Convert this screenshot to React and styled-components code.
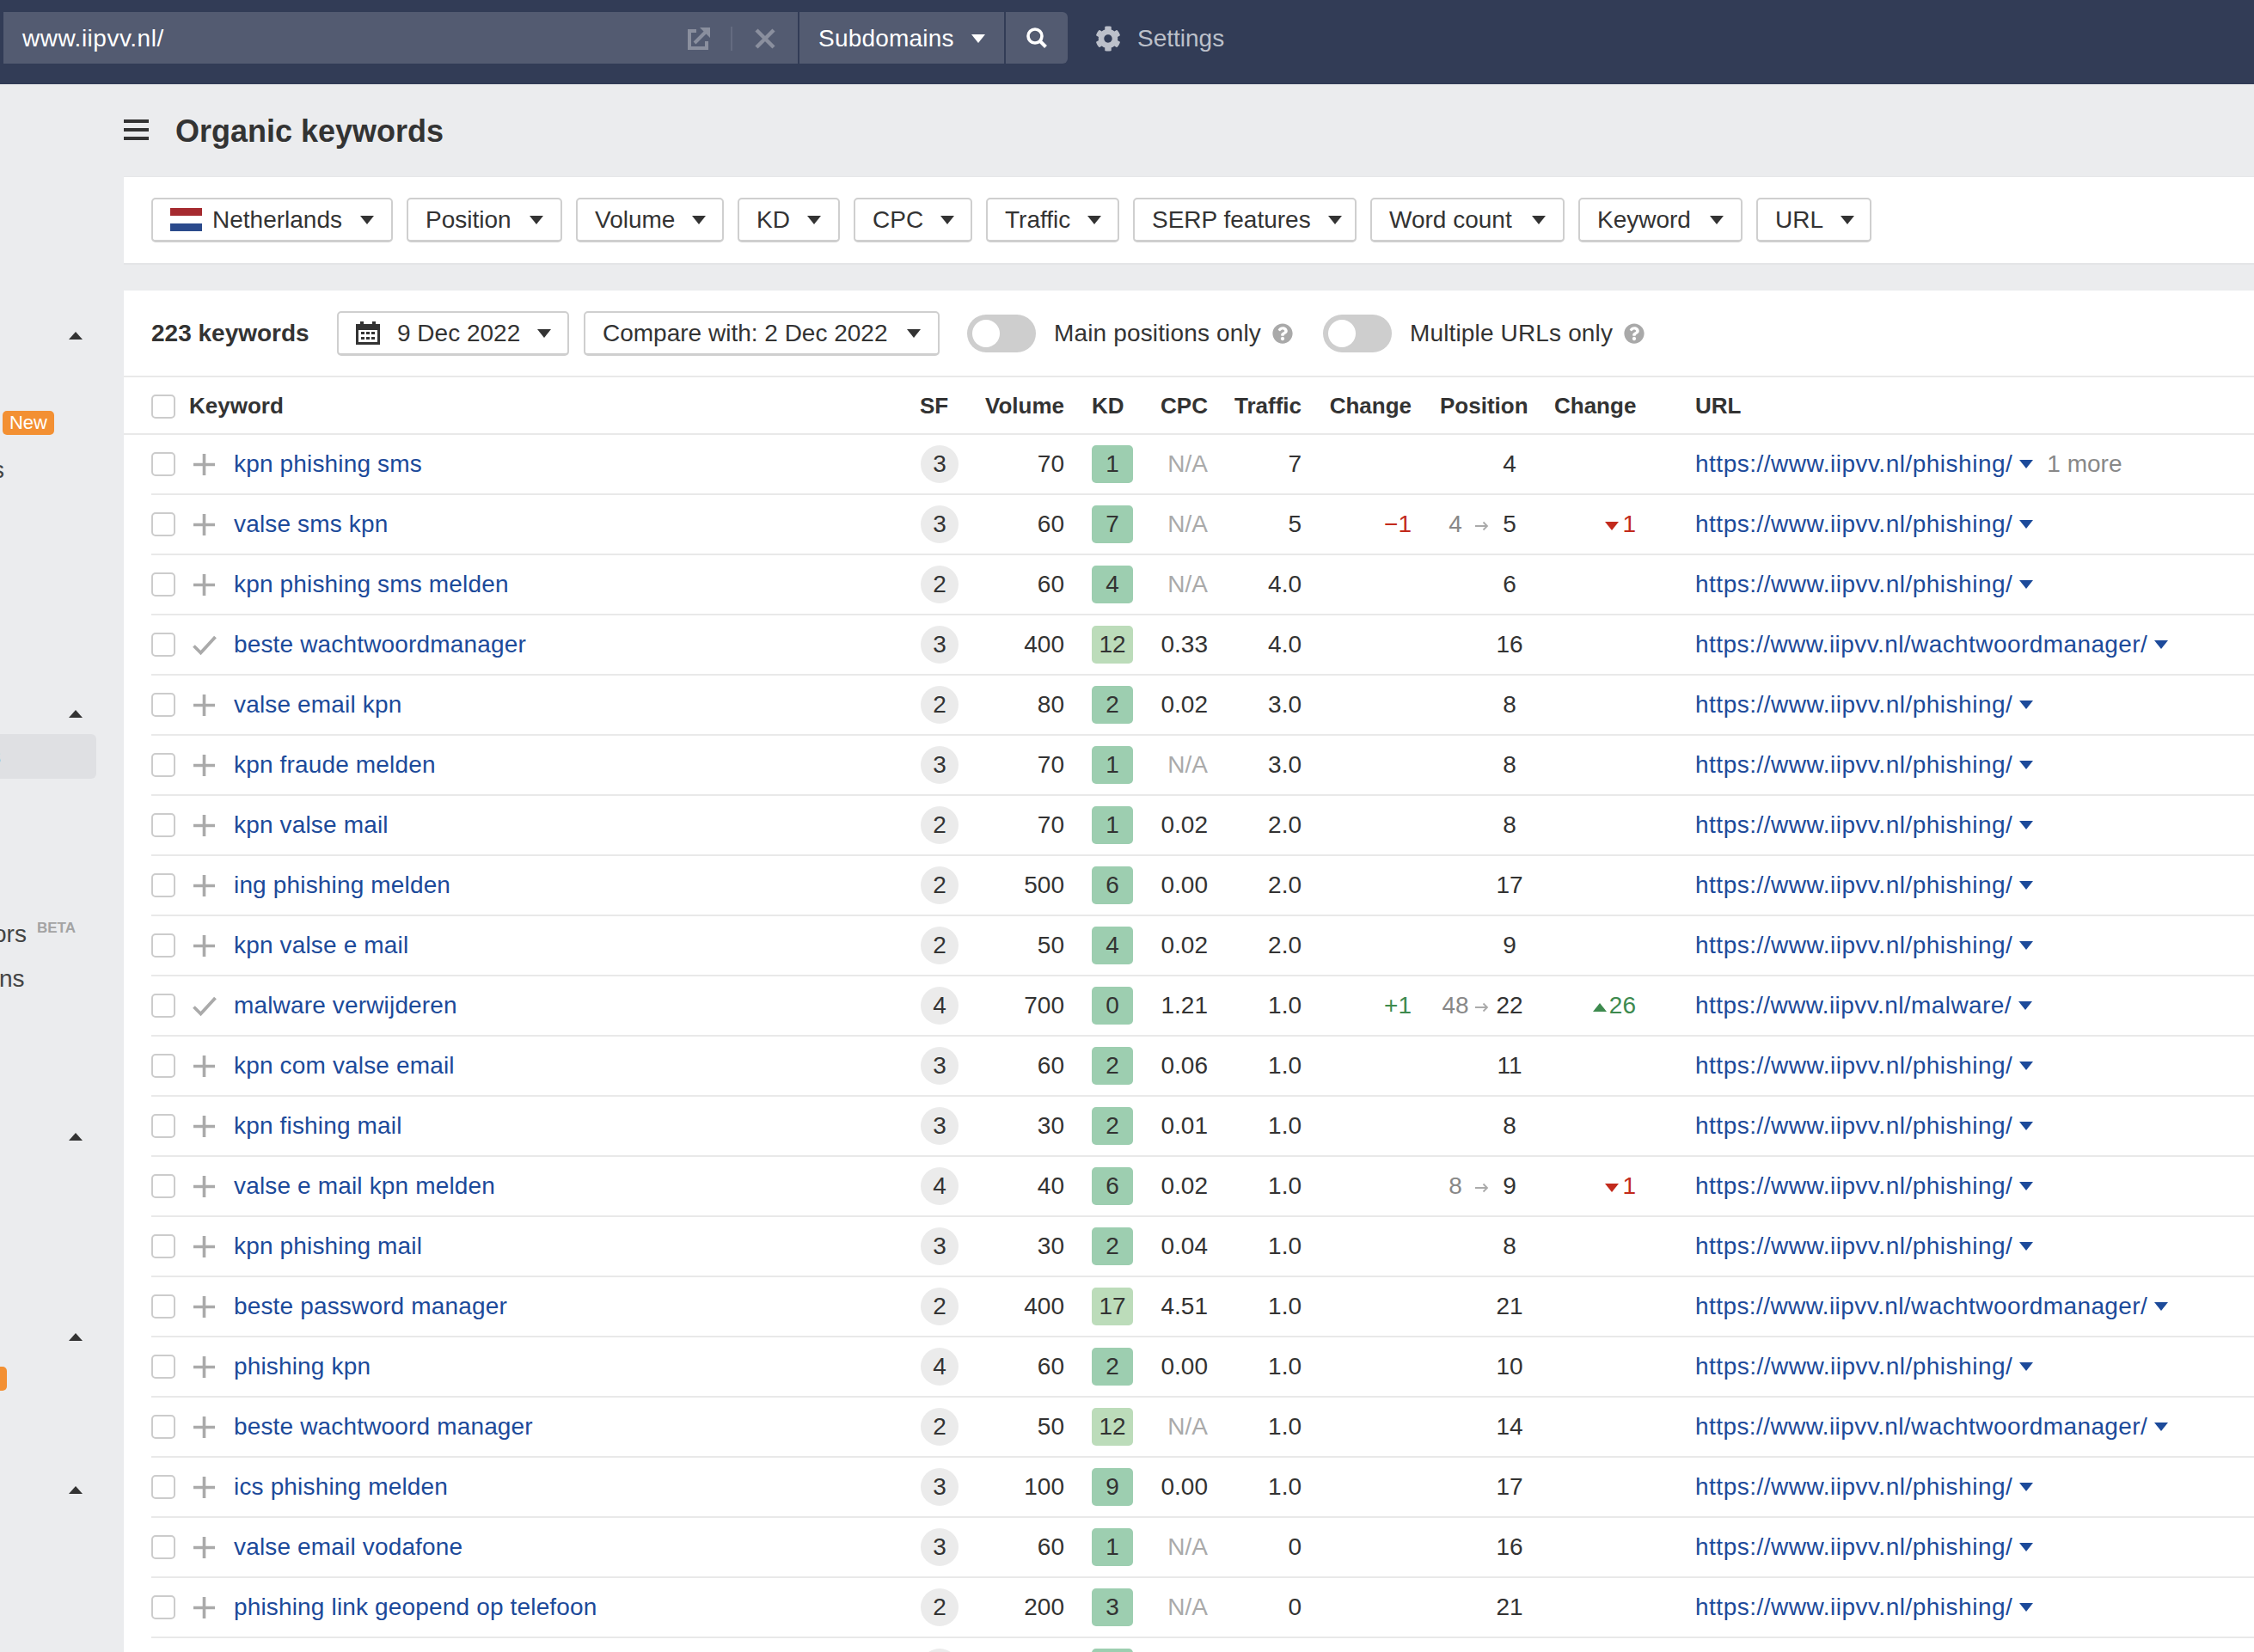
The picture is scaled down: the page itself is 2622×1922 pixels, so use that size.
import React from 'react'
import styled, { createGlobalStyle } from 'styled-components'
import { FaCog, FaQuestionCircle } from 'react-icons/fa'

const GlobalStyle = createGlobalStyle`
  html, body { margin: 0; padding: 0; background: #ebecee; }
  body { font-family: "Liberation Sans", Arial, sans-serif; font-size: 28px; color: #333; width: 2622px; height: 1922px; overflow: hidden; }
  * { box-sizing: border-box; }
`

const Topbar = styled.div`
  height: 98px;
  background: #323c56;
  display: flex;
  align-items: flex-start;
  padding-top: 14px;
`
const SearchBox = styled.div`
  display: flex;
  gap: 2px;
  height: 60px;
  margin-left: 4px;
`
const SearchPart = styled.div`
  height: 60px;
  background: #535b71;
  color: #fff;
  display: flex;
  align-items: center;
  width: ${p => p.$w}px;
  padding: ${p => p.$center ? 0 : 2}px ${p => p.$pad || 0}px 0;
  justify-content: ${p => p.$center ? 'center' : 'flex-start'};
  border-radius: ${p => p.$last ? '0 6px 6px 0' : '0'};
`
const UrlText = styled.span`
  flex: 1;
  letter-spacing: 0.5px;
`
const SubdomainText = styled.span`
  letter-spacing: 0.2px;
`
const UrlIcons = styled.div`
  display: flex;
  align-items: center;
  margin-right: 4px;
`
const IconSep = styled.span`
  width: 2px;
  height: 28px;
  background: #646b80;
  margin: 0 26px 0 24px;
`
const Caret = styled.span`
  display: inline-block;
  width: 0;
  height: 0;
  flex: none;
  border-left: ${p => p.$s || 8}px solid transparent;
  border-right: ${p => p.$s || 8}px solid transparent;
  border-top: ${p => (p.$s || 8) + 2}px solid ${p => p.$c || '#333'};
  margin-left: ${p => p.$ml ?? 20}px;
`
const SettingsLink = styled.div`
  display: flex;
  align-items: center;
  height: 60px;
  margin-left: 32px;
  padding-top: 2px;
  gap: 19px;
  color: #bcc0ca;
`

const Body = styled.div`
  display: flex;
  align-items: flex-start;
`
const Sidebar = styled.div`
  width: 144px;
  flex: none;
  height: 1824px;
  overflow: hidden;
  display: flex;
  flex-direction: column;
  font-size: 28px;
`
const SideArrow = styled.div`
  width: 0;
  height: 0;
  flex: none;
  margin-left: 80px;
  margin-top: ${p => p.$mt}px;
  border-left: 8px solid transparent;
  border-right: 8px solid transparent;
  border-bottom: 9px solid #333;
`
const NewBadge = styled.div`
  align-self: flex-start;
  flex: none;
  margin: ${p => p.$mt}px 0 0 3px;
  width: 60px;
  height: 28px;
  border-radius: 5px;
  background: #f39033;
  color: #fff;
  font-size: 22px;
  line-height: 28px;
  text-align: center;
`
const SideText = styled.div`
  flex: none;
  margin-top: ${p => p.$mt}px;
  margin-left: ${p => p.$ml || 0}px;
  line-height: 32px;
  color: #444;
  white-space: nowrap;
`
const SideBeta = styled.span`
  font-size: 17px;
  font-weight: bold;
  color: #a3a3a3;
  margin-left: 12px;
  vertical-align: 11px;
  line-height: 0;
`
const SideSelected = styled.div`
  width: 112px;
  height: 52px;
  flex: none;
  margin-top: ${p => p.$mt}px;
  background: #dfe0e3;
  border-radius: 0 6px 6px 0;
  line-height: 52px;
  color: #444;
  text-indent: -13px;
  overflow: hidden;
`
const OrangeStub = styled.div`
  width: 8px;
  height: 28px;
  flex: none;
  margin-top: ${p => p.$mt}px;
  background: #f39033;
  border-radius: 0 5px 5px 0;
`

const Main = styled.div`
  flex: 1;
  min-width: 0;
`
const TitleRow = styled.div`
  height: 108px;
  display: flex;
  align-items: center;
  padding-top: 2px;
  color: #333;
`
const BurgerIcon = styled.span`
  display: flex;
  flex-direction: column;
  gap: 6px;
  width: 29px;
  margin-right: 31px;
  margin-top: -4px;
  & > i {
    display: block;
    height: 4px;
    background: #333;
  }
`
const Title = styled.h1`
  margin: 0;
  font-size: 36px;
  font-weight: bold;
`
const FilterPanel = styled.div`
  height: 100px;
  background: #fff;
  box-shadow: 0 -1px 0 #e6e7e9, 0 2px 0 #e4e5e7;
  display: flex;
  align-items: center;
  padding-left: 32px;
`
const DropButton = styled.div`
  height: 52px;
  width: ${p => p.$w}px;
  margin-right: ${p => p.$mr ?? 16}px;
  flex: none;
  background: #fff;
  border: 2px solid #cfcfcf;
  border-bottom-width: 3px;
  border-radius: 5px;
  display: flex;
  align-items: center;
  justify-content: space-between;
  padding: 0 20px;
  white-space: nowrap;
`
const FlagText = styled.span`
  display: flex;
  align-items: center;
`
const Flag = styled.span`
  display: flex;
  flex-direction: column;
  width: 37px;
  height: 28px;
  margin-right: 12px;
`
const FlagStripe = styled.i`
  display: block;
  flex: 1;
  background: ${p => p.$c};
`
const TablePanel = styled.div`
  margin-top: 32px;
  background: #fff;
  height: 1584px;
  overflow: hidden;
`
const Toolbar = styled.div`
  height: 101px;
  display: flex;
  align-items: center;
  padding: 1px 0 0 32px;
  border-bottom: 2px solid #e9e9e9;
`
const KeywordCount = styled.b`
  font-size: 28px;
  width: 216px;
  flex: none;
`
const DateText = styled.span`
  display: flex;
  align-items: center;
  gap: 20px;
`
const Toggle = styled.span`
  width: 80px;
  height: 44px;
  flex: none;
  border-radius: 22px;
  background: #cecece;
  padding: 6px;
  display: flex;
  margin-left: ${p => p.$ml || 0}px;
  & > i {
    display: block;
    width: 32px;
    height: 32px;
    border-radius: 50%;
    background: #fff;
  }
`
const ToggleLabel = styled.span`
  margin-left: 21px;
  color: #333;
  letter-spacing: 0.15px;
`
const HelpIcon = styled.span`
  margin-left: 13px;
  display: flex;
  color: #a9a9a9;
`

const COLUMNS = '894px 60px 108px 80px 87px 109px 128px 138px 123px 69px 1fr'

const HeadRow = styled.div`
  height: 67px;
  display: grid;
  grid-template-columns: ${COLUMNS};
  align-items: center;
  margin-left: 32px;
  font-size: 26px;
  font-weight: bold;
  position: relative;
  &::after {
    content: '';
    position: absolute;
    left: -32px;
    right: 0;
    bottom: 0;
    height: 2px;
    background: #e9e9e9;
  }
`
const Row = styled.div`
  height: 70px;
  display: grid;
  grid-template-columns: ${COLUMNS};
  align-items: center;
  margin-left: 32px;
  border-bottom: 2px solid #e9e9e9;
`
const KeywordCell = styled.div`
  display: flex;
  align-items: center;
  min-width: 0;
`
const Check = styled.span`
  width: 28px;
  height: 28px;
  flex: none;
  border: 2px solid #ccc;
  border-radius: 5px;
  background: #fff;
`
const AddIcon = styled.span`
  width: 25px;
  height: 25px;
  flex: none;
  margin: 0 22px 0 21px;
  display: flex;
`
const DoneSvg = styled.svg`
  margin-left: -1px;
  flex: none;
`
const KeywordLink = styled.a`
  color: #1c4a9a;
  white-space: nowrap;
  letter-spacing: 0.16px;
`
const HeadKeyword = styled.span`
  margin-left: 16px;
`
const Right = styled.div`
  text-align: right;
  color: ${p => p.$c || 'inherit'};
  white-space: nowrap;
`
const Left = styled.div`
  padding-left: ${p => p.$pl || 0}px;
`
const SfBadge = styled.span`
  display: block;
  width: 44px;
  height: 44px;
  margin-left: 1px;
  border-radius: 50%;
  background: #ebebeb;
  text-align: center;
  line-height: 44px;
`
const KdBadge = styled.span`
  display: block;
  justify-self: end;
  width: 48px;
  height: 44px;
  border-radius: 5px;
  background: ${p => p.$v >= 10 ? '#bcdcba' : '#9dceb0'};
  text-align: center;
  line-height: 44px;
`
const PosGrid = styled.div`
  display: grid;
  grid-template-columns: 46px 16px 48px;
  margin-left: 28px;
  text-align: center;
`
const PosFrom = styled.span`
  color: #888;
`
const PosArrow = styled.span`
  display: flex;
  align-items: center;
  justify-content: center;
  padding-top: 4px;
`
const UrlCell = styled.div`
  display: flex;
  align-items: center;
  white-space: nowrap;
  color: #1c4a9a;
`
const UrlLink = styled.a`
  letter-spacing: ${p => p.$tight ? 0.42 : 0.5}px;
`
const MoreText = styled.span`
  color: #888;
  margin-left: 16px;
`
const ChangeTri = styled.span`
  display: inline-block;
  width: 0;
  height: 0;
  margin-right: ${p => p.$mr}px;
  vertical-align: 2px;
  border-left: 8px solid transparent;
  border-right: 8px solid transparent;
  ${p => p.$up
    ? 'border-bottom: 10px solid #3d8a4e;'
    : 'border-top: 10px solid #c22a1c;'}
`

const PH = 'https://www.iipvv.nl/phishing/'
const WW = 'https://www.iipvv.nl/wachtwoordmanager/'

const rows = [
  { k: 'kpn phishing sms', sf: 3, vol: 70, kd: 1, cpc: 'N/A', tr: '7', pos: 4, url: PH, more: '1 more' },
  { k: 'valse sms kpn', sf: 3, vol: 60, kd: 7, cpc: 'N/A', tr: '5', ch: '−1', from: 4, pos: 5, pc: -1, url: PH },
  { k: 'kpn phishing sms melden', sf: 2, vol: 60, kd: 4, cpc: 'N/A', tr: '4.0', pos: 6, url: PH },
  { k: 'beste wachtwoordmanager', done: true, sf: 3, vol: 400, kd: 12, cpc: '0.33', tr: '4.0', pos: 16, url: WW },
  { k: 'valse email kpn', sf: 2, vol: 80, kd: 2, cpc: '0.02', tr: '3.0', pos: 8, url: PH },
  { k: 'kpn fraude melden', sf: 3, vol: 70, kd: 1, cpc: 'N/A', tr: '3.0', pos: 8, url: PH },
  { k: 'kpn valse mail', sf: 2, vol: 70, kd: 1, cpc: '0.02', tr: '2.0', pos: 8, url: PH },
  { k: 'ing phishing melden', sf: 2, vol: 500, kd: 6, cpc: '0.00', tr: '2.0', pos: 17, url: PH },
  { k: 'kpn valse e mail', sf: 2, vol: 50, kd: 4, cpc: '0.02', tr: '2.0', pos: 9, url: PH },
  { k: 'malware verwijderen', done: true, sf: 4, vol: 700, kd: 0, cpc: '1.21', tr: '1.0', ch: '+1', from: 48, pos: 22, pc: 26, url: 'https://www.iipvv.nl/malware/' },
  { k: 'kpn com valse email', sf: 3, vol: 60, kd: 2, cpc: '0.06', tr: '1.0', pos: 11, url: PH },
  { k: 'kpn fishing mail', sf: 3, vol: 30, kd: 2, cpc: '0.01', tr: '1.0', pos: 8, url: PH },
  { k: 'valse e mail kpn melden', sf: 4, vol: 40, kd: 6, cpc: '0.02', tr: '1.0', from: 8, pos: 9, pc: -1, url: PH },
  { k: 'kpn phishing mail', sf: 3, vol: 30, kd: 2, cpc: '0.04', tr: '1.0', pos: 8, url: PH },
  { k: 'beste password manager', sf: 2, vol: 400, kd: 17, cpc: '4.51', tr: '1.0', pos: 21, url: WW },
  { k: 'phishing kpn', sf: 4, vol: 60, kd: 2, cpc: '0.00', tr: '1.0', pos: 10, url: PH },
  { k: 'beste wachtwoord manager', sf: 2, vol: 50, kd: 12, cpc: 'N/A', tr: '1.0', pos: 14, url: WW },
  { k: 'ics phishing melden', sf: 3, vol: 100, kd: 9, cpc: '0.00', tr: '1.0', pos: 17, url: PH },
  { k: 'valse email vodafone', sf: 3, vol: 60, kd: 1, cpc: 'N/A', tr: '0', pos: 16, url: PH },
  { k: 'phishing link geopend op telefoon', sf: 2, vol: 200, kd: 3, cpc: 'N/A', tr: '0', pos: 21, url: PH },
  { k: '', sf: '', vol: '', kd: 3, cpc: '', tr: '', pos: '', url: '' },
]

const filters = [
  ['Position', 181], ['Volume', 172], ['KD', 119], ['CPC', 138], ['Traffic', 155],
  ['SERP features', 260], ['Word count', 226], ['Keyword', 191], ['URL', 134],
]

const PlusSvg = () => (
  <svg width="25" height="25" viewBox="0 0 25 25">
    <path d="M12.5 0v25M0 12.5h25" stroke="#aaa" strokeWidth="3.6" fill="none" />
  </svg>
)
const CheckSvg = () => (
  <DoneSvg width="28" height="25" viewBox="0 0 28 25">
    <path d="M1.500 13.500l8 8L26.500 3" stroke="#aaa" strokeWidth="3.8" fill="none" />
  </DoneSvg>
)
const ArrowSvg = () => (
  <svg width="16" height="12" viewBox="0 0 16 12">
    <path d="M0 6h14M9.500 1.500L14 6l-4.500 4.500" stroke="#aaa" strokeWidth="1.800" fill="none" />
  </svg>
)
const OpenLinkSvg = () => (
  <svg width="26" height="26" viewBox="0 0 26 26">
    <path d="M10 4H2v20h20v-8" stroke="#8a8f9e" strokeWidth="4" fill="none" />
    <path d="M8 18L21 5" stroke="#8a8f9e" strokeWidth="4" fill="none" />
    <path d="M14 0h12v12z" fill="#8a8f9e" />
  </svg>
)
const ClearSvg = () => (
  <svg width="24" height="24" viewBox="0 0 24 24">
    <path d="M2 2l20 20M22 2L2 22" stroke="#8a8f9e" strokeWidth="4.500" fill="none" />
  </svg>
)
const SearchSvg = () => (
  <svg width="24" height="24" viewBox="0 0 24 24">
    <circle cx="10" cy="10" r="8" stroke="#fff" strokeWidth="3.600" fill="none" />
    <path d="M15.500 15.500L22.500 22.500" stroke="#fff" strokeWidth="4" fill="none" />
  </svg>
)
const CalendarSvg = () => (
  <svg width="28" height="27" viewBox="0 0 28 27">
    <path d="M5 0h4v4H5zM19 0h4v4h-4z" fill="#333" />
    <path fillRule="evenodd" fill="#333" d="M0 3h28v24H0zM3 10v14h22V10z" />
    <path fill="#333" d="M6 12h4v3H6zM12 12h4v3h-4zM18 12h4v3h-4zM6 18h4v3H6zM12 18h4v3h-4zM18 18h4v3h-4z" />
  </svg>
)

const App = () => (
  <>
    <GlobalStyle />
    <Topbar>
      <SearchBox>
        <SearchPart $w={924} $pad={22}>
          <UrlText>www.iipvv.nl/</UrlText>
          <UrlIcons>
            <OpenLinkSvg />
            <IconSep />
            <ClearSvg />
          </UrlIcons>
        </SearchPart>
        <SearchPart $w={238} $pad={22}>
          <SubdomainText>Subdomains</SubdomainText>
          <Caret $c="#fff" $ml={20} />
        </SearchPart>
        <SearchPart $w={72} $center $last>
          <SearchSvg />
        </SearchPart>
      </SearchBox>
      <SettingsLink>
        <FaCog size={30} />
        Settings
      </SettingsLink>
    </Topbar>
    <Body>
      <Sidebar>
        <SideArrow $mt={288} />
        <NewBadge $mt={83}>New</NewBadge>
        <SideText $mt={25} $ml={-9}>s</SideText>
        <SideArrow $mt={263} />
        <SideSelected $mt={19}>s</SideSelected>
        <SideText $mt={165} $ml={-8}>ors<SideBeta>BETA</SideBeta></SideText>
        <SideText $mt={20} $ml={-1}>ns</SideText>
        <SideArrow $mt={163} />
        <SideArrow $mt={224} />
        <OrangeStub $mt={30} />
        <SideArrow $mt={111} />
      </Sidebar>
      <Main>
        <TitleRow>
          <BurgerIcon><i /><i /><i /></BurgerIcon>
          <Title>Organic keywords</Title>
        </TitleRow>
        <FilterPanel>
          <DropButton $w={281}>
            <FlagText>
              <Flag>
                <FlagStripe $c="#a52a2f" />
                <FlagStripe $c="#fff" />
                <FlagStripe $c="#2b4a8c" />
              </Flag>
              Netherlands
            </FlagText>
            <Caret />
          </DropButton>
          {filters.map(([label, w]) => (
            <DropButton key={label} $w={w}>
              {label}
              <Caret />
            </DropButton>
          ))}
        </FilterPanel>
        <TablePanel>
          <Toolbar>
            <KeywordCount>223 keywords</KeywordCount>
            <DropButton $w={270} $mr={17}>
              <DateText><CalendarSvg />9 Dec 2022</DateText>
              <Caret />
            </DropButton>
            <DropButton $w={414} $mr={32}>
              Compare with: 2 Dec 2022
              <Caret />
            </DropButton>
            <Toggle><i /></Toggle>
            <ToggleLabel>Main positions only</ToggleLabel>
            <HelpIcon><FaQuestionCircle size={24} /></HelpIcon>
            <Toggle $ml={35}><i /></Toggle>
            <ToggleLabel>Multiple URLs only</ToggleLabel>
            <HelpIcon><FaQuestionCircle size={24} /></HelpIcon>
          </Toolbar>
          <HeadRow>
            <KeywordCell><Check /><HeadKeyword>Keyword</HeadKeyword></KeywordCell>
            <div>SF</div>
            <Right>Volume</Right>
            <Left $pl={32}>KD</Left>
            <Right>CPC</Right>
            <Right>Traffic</Right>
            <Right>Change</Right>
            <Left $pl={33}>Position</Left>
            <Left $pl={28}>Change</Left>
            <div />
            <div>URL</div>
          </HeadRow>
          {rows.map((r, i) => (
            <Row key={i}>
              <KeywordCell>
                {r.k && <Check />}
                {r.k && <AddIcon>{r.done ? <CheckSvg /> : <PlusSvg />}</AddIcon>}
                <KeywordLink>{r.k}</KeywordLink>
              </KeywordCell>
              <div><SfBadge>{r.sf}</SfBadge></div>
              <Right>{r.vol}</Right>
              <KdBadge $v={r.kd}>{r.k ? r.kd : ''}</KdBadge>
              <Right $c={r.cpc === 'N/A' ? '#aaa' : undefined}>{r.cpc}</Right>
              <Right>{r.tr}</Right>
              <Right $c={r.ch && r.ch[0] === '+' ? '#3d8a4e' : '#c22a1c'}>{r.ch}</Right>
              <PosGrid>
                {r.from ? <PosFrom>{r.from}</PosFrom> : <span />}
                {r.from ? <PosArrow><ArrowSvg /></PosArrow> : <span />}
                <span>{r.pos}</span>
              </PosGrid>
              <Right $c={r.pc > 0 ? '#3d8a4e' : '#c22a1c'}>
                {r.pc ? (
                  <>
                    <ChangeTri $up={r.pc > 0} $mr={r.pc > 0 ? 3 : 4} />
                    {Math.abs(r.pc)}
                  </>
                ) : null}
              </Right>
              <div />
              <UrlCell>
                <UrlLink $tight={r.url !== PH}>{r.url}</UrlLink>
                {r.url && <Caret $c="#1c4a9a" $ml={8} />}
                {r.more && <MoreText>{r.more}</MoreText>}
              </UrlCell>
            </Row>
          ))}
        </TablePanel>
      </Main>
    </Body>
  </>
)

export default App
